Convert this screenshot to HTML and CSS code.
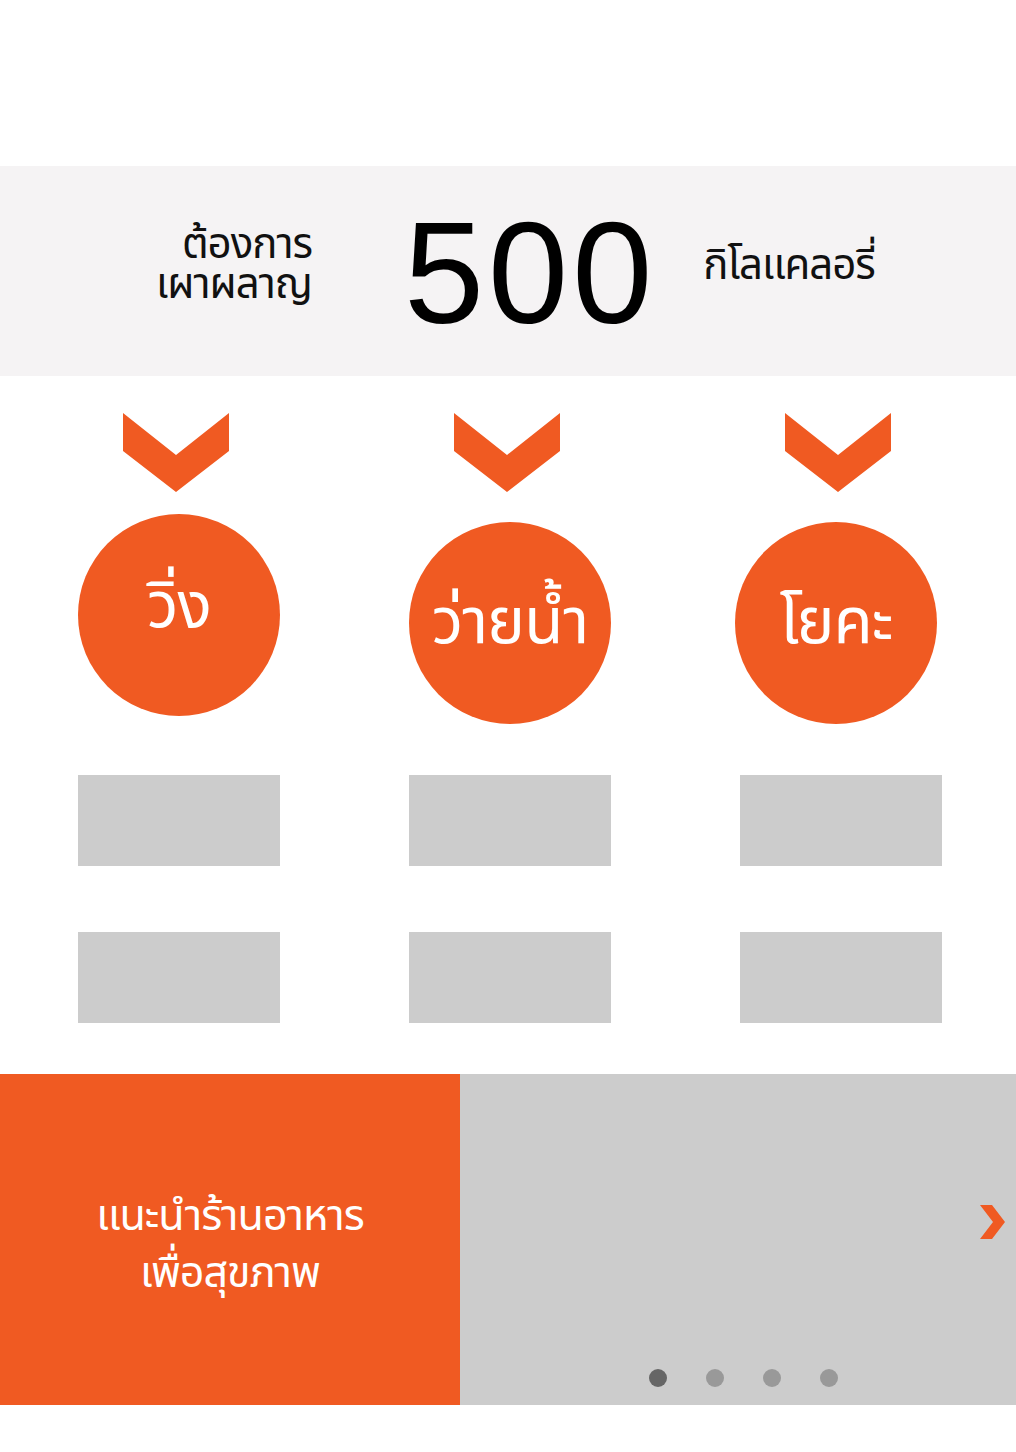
FILE: index.html
```html
<!DOCTYPE html>
<html lang="th">
<head>
<meta charset="utf-8">
<link rel="stylesheet" href="styles.css">
</head>
<body>
<div class="page">
  <section class="goal">
    <div class="goal-label">ต้องการ<br>เผาผลาญ</div>
    <div class="goal-number">500</div>
    <div class="goal-unit">กิโลแคลอรี่</div>
  </section>

  <section class="activities">
    <div class="col">
      <svg class="chev" width="106" height="79" viewBox="0 0 106 79"><polygon points="0,0 53,42 106,0 106,38 53,79 0,38" fill="#f05a22"/></svg>
      <div class="circle circle-first">วิ่ง</div>
      <div class="box"></div>
      <div class="box"></div>
    </div>
    <div class="col">
      <svg class="chev" width="106" height="79" viewBox="0 0 106 79"><polygon points="0,0 53,42 106,0 106,38 53,79 0,38" fill="#f05a22"/></svg>
      <div class="circle">ว่ายน้ำ</div>
      <div class="box"></div>
      <div class="box"></div>
    </div>
    <div class="col">
      <svg class="chev" width="106" height="79" viewBox="0 0 106 79"><polygon points="0,0 53,42 106,0 106,38 53,79 0,38" fill="#f05a22"/></svg>
      <div class="circle circle-last">โยคะ</div>
      <div class="box"></div>
      <div class="box"></div>
    </div>
  </section>

  <section class="promo">
    <div class="promo-text">แนะนำร้านอาหาร<br>เพื่อสุขภาพ</div>
    <div class="promo-slider">
      <svg class="next" width="26" height="34" viewBox="0 0 26 34"><polygon points="0,0 12,0 25,17 12,34 0,34 13,17" fill="#f05a22"/></svg>
      <div class="dots">
        <span class="dot dot-active"></span>
        <span class="dot"></span>
        <span class="dot"></span>
        <span class="dot"></span>
      </div>
    </div>
  </section>
</div>
</body>
</html>
```

FILE: styles.css
```css
html, body {
  margin: 0;
  padding: 0;
  background: #ffffff;
}
body {
  width: 1016px;
  height: 1452px;
  overflow: hidden;
  font-family: "Noto Sans Thai", "Noto Sans", "DejaVu Sans", sans-serif;
}
.page {
  padding-top: 166px;
}
.goal {
  height: 210px;
  background: #f5f3f4;
  display: flex;
  align-items: center;
  padding-left: 112px;
  box-sizing: border-box;
}
.goal-label {
  width: 200px;
  text-align: right;
  font-size: 42px;
  line-height: 40px;
  color: #111;
  letter-spacing: -1px;
  margin-top: -12px;
}
.goal-number {
  margin-left: 92px;
  font-family: "Liberation Sans", Arial, sans-serif;
  font-size: 144px;
  line-height: 1;
  color: #000;
  letter-spacing: 4px;
  margin-top: 6px;
}
.goal-unit {
  margin-left: 47px;
  font-size: 42px;
  color: #111;
  letter-spacing: -1px;
  margin-top: -10px;
}
.activities {
  display: grid;
  grid-template-columns: repeat(3, 202px);
  column-gap: 129px;
  padding-left: 78px;
  padding-top: 37px;
}
.col {
  display: flex;
  flex-direction: column;
  align-items: center;
}
.chev {
  display: block;
  margin-left: -6px;
}
.circle {
  width: 202px;
  height: 202px;
  border-radius: 50%;
  background: #f05a22;
  color: #fff;
  font-size: 64px;
  display: flex;
  align-items: center;
  justify-content: center;
  margin-top: 30px;
  letter-spacing: -1px;
}
.circle-first {
  margin-top: 22px;
  margin-bottom: 8px;
  padding-bottom: 16px;
  box-sizing: border-box;
}
.circle-last {
  margin-right: 10px;
}
.box {
  width: 202px;
  height: 91px;
  background: #cccccc;
  margin-top: 51px;
}
.box + .box {
  margin-top: 66px;
}
.promo {
  margin-top: 51px;
  display: flex;
  height: 331px;
}
.promo-text {
  width: 460px;
  background: #f05a22;
  color: #fff;
  font-size: 43px;
  line-height: 57px;
  text-align: center;
  display: flex;
  align-items: center;
  justify-content: center;
  letter-spacing: -1px;
  padding-top: 10px;
  box-sizing: border-box;
}
.promo-slider {
  flex: 1;
  background: #cccccc;
  position: relative;
}
.next {
  position: absolute;
  right: 10px;
  top: 131px;
}
.dots {
  position: absolute;
  left: 189px;
  bottom: 18px;
  display: flex;
  gap: 39px;
}
.dot {
  width: 18px;
  height: 18px;
  border-radius: 50%;
  background: #999999;
}
.dot-active {
  background: #666666;
}
```
